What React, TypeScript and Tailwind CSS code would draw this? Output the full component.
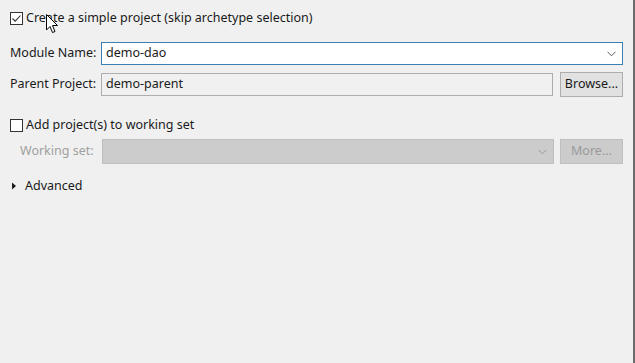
import React from "react";

const Check = ({ checked }: { checked?: boolean }) => (
  <span className="flex h-[13px] w-[13px] shrink-0 items-center justify-center border border-[#333] bg-white">
    {checked && (
      <svg width="11" height="11" viewBox="0 0 11 11">
        <path d="M1.5 5.5 L4.2 8.2 L9.5 2.5" fill="none" stroke="#333" strokeWidth="1.1" />
      </svg>
    )}
  </span>
);

const Chevron = ({ color }: { color: string }) => (
  <svg width="9" height="6" viewBox="0 0 9 6">
    <path d="M0.5 0.8 L4.5 4.8 L8.5 0.8" fill="none" stroke={color} strokeWidth="1" />
  </svg>
);

export default function App() {
  return (
    <div
      className="relative h-[363px] w-[635px] overflow-hidden border-r-2 border-[#6b6b6b] bg-[#f0f0f0] text-[12.5px] text-[#1a1a1a]"
      style={{ fontFamily: '"Noto Sans", "Open Sans", sans-serif' }}
    >
      <div className="flex flex-col pl-[10px] pr-[10px] pt-[9px]">
        <label className="flex h-[19px] items-center gap-[3px]">
          <Check checked />
          <span>Create a simple project (skip archetype selection)</span>
        </label>

        <div className="mt-[14px] flex h-[23px] items-center">
          <span className="w-[91px]">Module Name:</span>
          <div className="flex h-[23px] flex-1 items-center border border-[#3c7fb1] bg-white pl-[4px] pr-[6px]">
            <span className="flex-1">demo-dao</span>
            <Chevron color="#555" />
          </div>
        </div>

        <div className="mt-[7px] flex h-[25px] items-center">
          <span className="w-[91px]">Parent Project:</span>
          <div className="flex h-[23px] flex-1 items-center border border-[#adadad] bg-[#f0f0f0] pl-[4px]">
            demo-parent
          </div>
          <button className="ml-[7px] h-[25px] w-[63px] border border-[#adadad] bg-[#e1e1e1] text-[12.5px]">
            Browse...
          </button>
        </div>

        <label className="mt-[19px] flex h-[19px] items-center gap-[3px]">
          <Check />
          <span>Add project(s) to working set</span>
        </label>

        <div className="mt-[4px] flex h-[25px] items-center">
          <span className="w-[92px] pl-[10px] text-[#a0a0a0]">Working set:</span>
          <div className="flex h-[25px] flex-1 items-center justify-end border border-[#bfbfbf] bg-[#cccccc] pr-[6px]">
            <Chevron color="#9a9a9a" />
          </div>
          <button className="ml-[6px] h-[25px] w-[63px] border border-[#bfbfbf] bg-[#cccccc] text-[12.5px] text-[#9a9a9a]">
            More...
          </button>
        </div>

        <div className="mt-[12px] flex h-[20px] items-center">
          <svg width="15" height="10" viewBox="0 0 15 10">
            <path d="M2 1.5 L6 5 L2 8.5 Z" fill="#1a1a1a" />
          </svg>
          <span>Advanced</span>
        </div>
      </div>

      <svg className="absolute left-[46px] top-[14px]" width="13" height="20" viewBox="0 0 13 20">
        <path d="M0.5 0.5 L0.5 16 L4 12.5 L6.5 18.5 L9 17.5 L6.5 11.5 L11.5 11.5 Z" fill="white" stroke="black" strokeWidth="1" />
      </svg>
    </div>
  );
}
